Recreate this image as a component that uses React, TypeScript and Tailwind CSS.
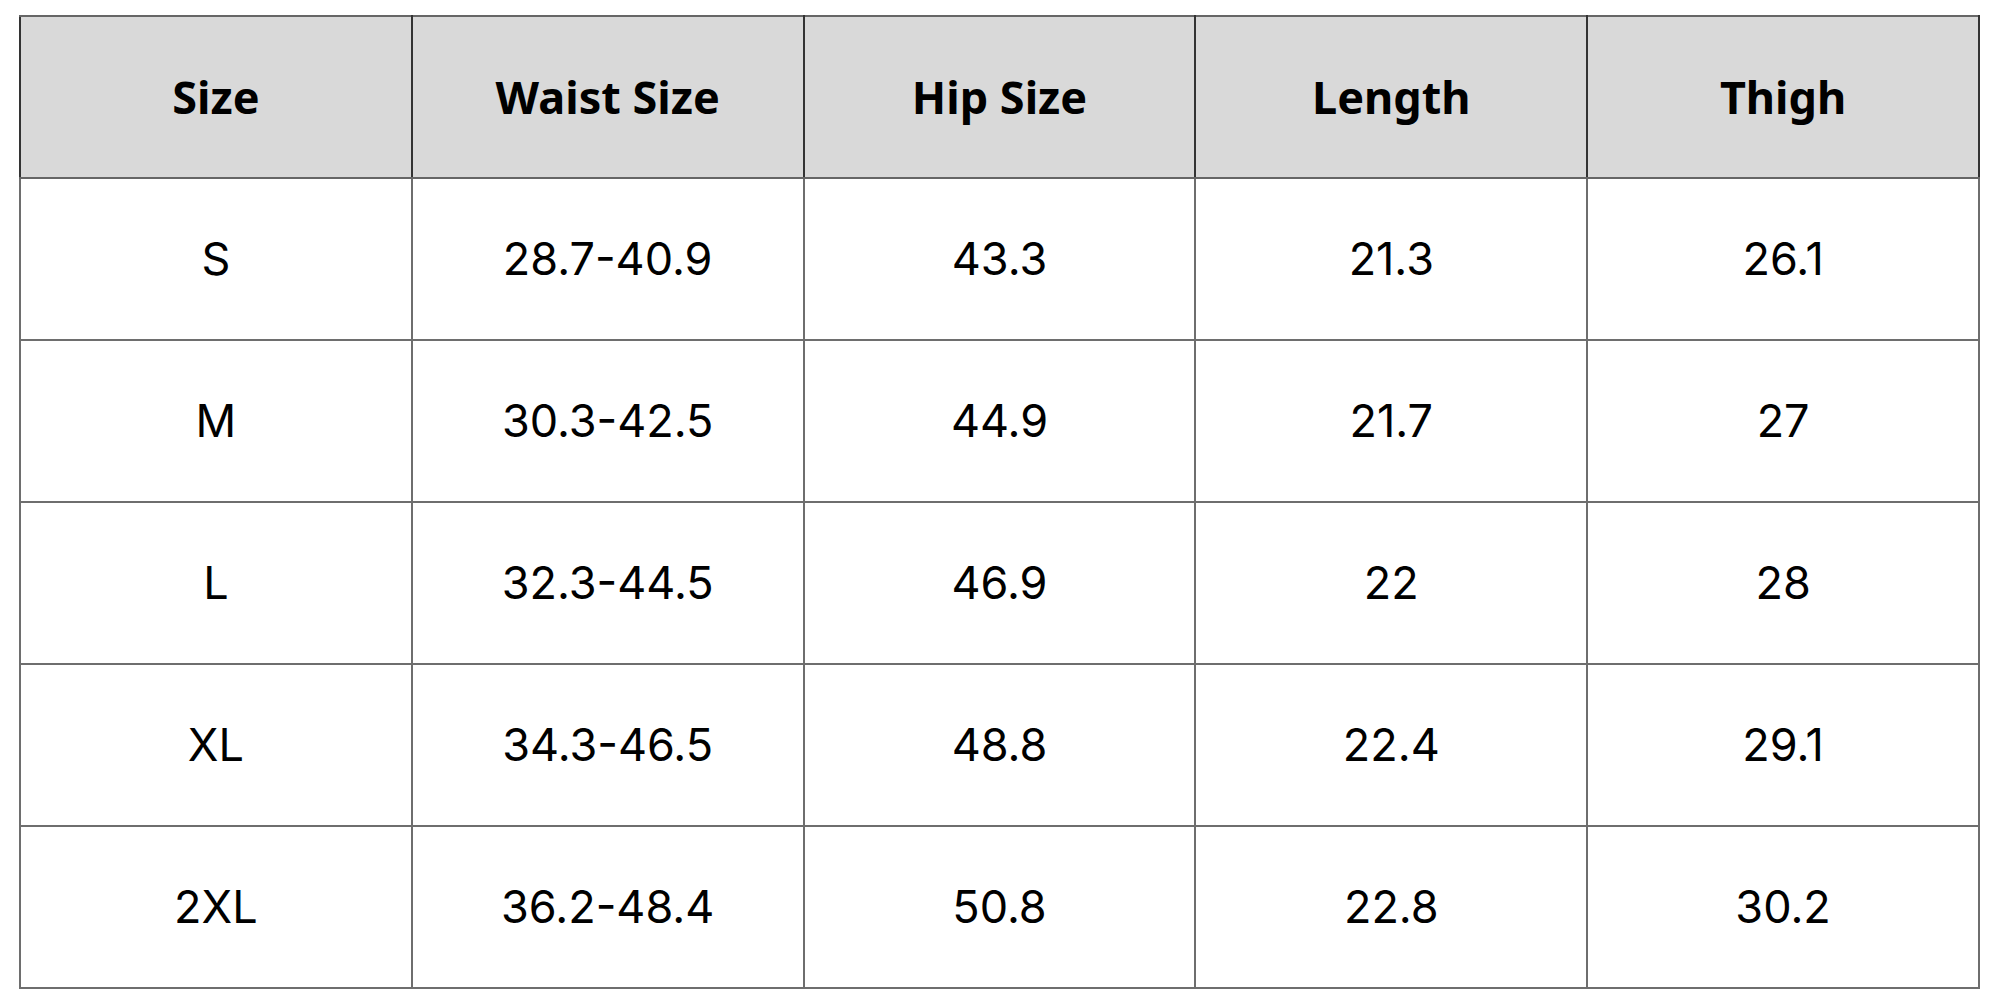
const headers = ["Size", "Waist Size", "Hip Size", "Length", "Thigh"];

const rows = [
  ["S", "28.7-40.9", "43.3", "21.3", "26.1"],
  ["M", "30.3-42.5", "44.9", "21.7", "27"],
  ["L", "32.3-44.5", "46.9", "22", "28"],
  ["XL", "34.3-46.5", "48.8", "22.4", "29.1"],
  ["2XL", "36.2-48.4", "50.8", "22.8", "30.2"],
];

export default function App() {
  return (
    <div className="h-[1000px] w-[2000px] bg-white pl-[19px] pt-[15px] text-black">
      <table className="w-[1961px] table-fixed border-collapse border-2 border-[#666666]">
        <thead>
          <tr className="h-[162px] bg-[#d9d9d9]">
            {headers.map((h) => (
              <th
                key={h}
                className="border-2 border-x-[#333333] border-y-[#666666] text-center font-['Noto_Sans',sans-serif] text-[45px] font-bold"
              >
                {h}
              </th>
            ))}
          </tr>
        </thead>
        <tbody>
          {rows.map((row) => (
            <tr key={row[0]} className="h-[162px]">
              {row.map((cell, i) => (
                <td
                  key={i}
                  className="border-2 border-[#6e6e6e] text-center font-['Inter',sans-serif] text-[45px] font-normal"
                >
                  {cell}
                </td>
              ))}
            </tr>
          ))}
        </tbody>
      </table>
    </div>
  );
}
